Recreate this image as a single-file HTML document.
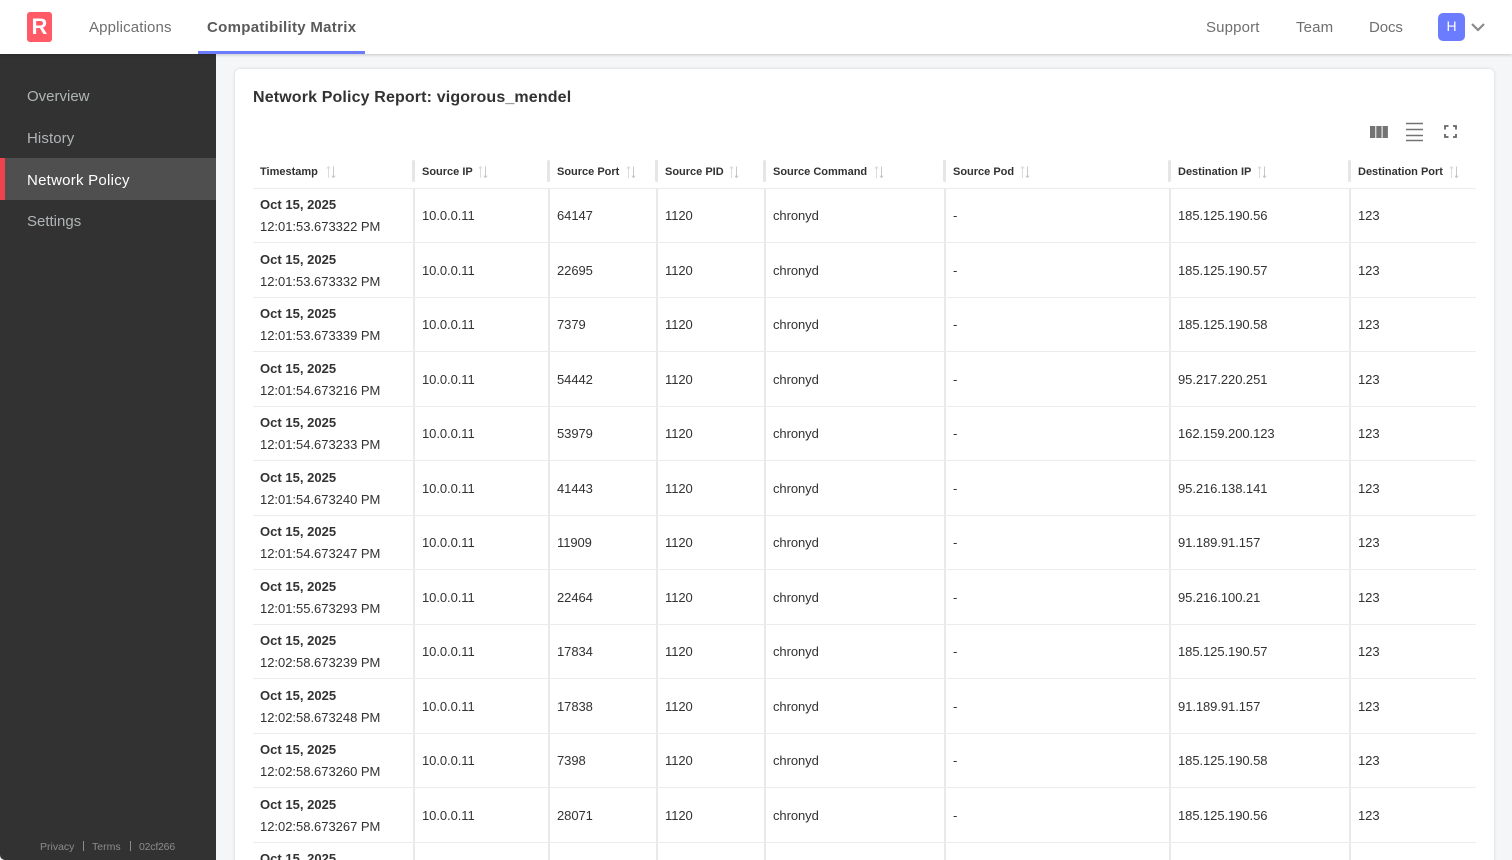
<!DOCTYPE html>
<html><head><meta charset="utf-8"><title>Network Policy Report</title>
<style>
*{box-sizing:border-box}
html,body{margin:0;padding:0;width:1512px;height:860px;overflow:hidden;background:#f5f6f8;font-family:"Liberation Sans",sans-serif}
#wrap{position:relative;left:0;top:0;width:1512px;height:860px;overflow:hidden}
div,span{position:absolute;white-space:nowrap}
#top{left:0;top:0;width:1512px;height:54px;background:#fff;box-shadow:0 1px 3px rgba(0,0,0,.2);z-index:3}
.n{top:18px;line-height:20px;font-size:15px;color:#6f6f6f;letter-spacing:.15px}
#side{left:0;top:54px;width:216px;height:806px;background:#323232;border-bottom-left-radius:5px}
.s{left:27px;line-height:20px;font-size:15px;color:#b0b5b5;letter-spacing:0}
.f{top:840px;line-height:14px;font-size:10.500px;color:#8c8c8c;letter-spacing:0}
#card{left:235px;top:69px;width:1259px;height:820px;background:#fff;border-radius:5px;box-shadow:0 0 3px rgba(0,0,0,.14)}
#title{left:253px;top:88px;line-height:20px;font-size:16px;font-weight:bold;color:#323232;letter-spacing:.14px}
.h{top:165px;line-height:14px;font-size:11px;font-weight:bold;color:#323232;letter-spacing:0}
.gh{top:160px;width:3px;height:22px;background:#e6e6e6;border-radius:2px}
.v{top:188px;width:2px;height:672px;background:#e9e9e9}
.l{left:253px;width:1223px;height:1px;background:#ececec}
.r{left:0;width:1512px;height:54px;font-size:13px;color:#323232;letter-spacing:-.07px}
.r span{line-height:16px;top:21px}
.r .d{left:260px;top:10px;font-weight:bold;letter-spacing:.02px}
.r .t{left:260px;top:32px;letter-spacing:-.02px}
.a{left:422px}.b{left:557px}.c{left:665px}.e{left:773px}.g{left:953px}.i{left:1178px}.j{left:1358px}
svg{position:absolute;overflow:visible}
</style></head><body><div id="wrap">
<div id="side">
<div style="left:0;top:104px;width:216px;height:42px;background:#4f4f4f"></div>
<div style="left:0;top:104px;width:5px;height:42px;background:#f0414f"></div>
</div>
<div class="s" style="top:87px">Overview</div>
<div class="s" style="top:129px;letter-spacing:.1px">History</div>
<div class="s" style="top:171px;color:#fff;letter-spacing:.25px">Network Policy</div>
<div class="s" style="top:212px">Settings</div>
<div class="f" style="left:40px">Privacy</div><div style="left:83px;top:841px;width:1px;height:10px;background:#8c8c8c"></div>
<div class="f" style="left:92px">Terms</div><div style="left:130px;top:841px;width:1px;height:10px;background:#8c8c8c"></div>
<div class="f" style="left:139px;letter-spacing:-.2px">02cf266</div>

<div id="card"></div>
<div id="title">Network Policy Report: vigorous_mendel</div>
<svg style="left:1370px;top:126px" width="18" height="12"><path d="M0 0h5.300v12H0zM6.300 0h5.300v12H6.300zM12.600 0h5.300v12h-5.300z" fill="#737373"/></svg>
<svg style="left:1406px;top:122px" width="17" height="20"><path d="M0 1.500h17M0 7.500h17M0 13.500h17M0 18.500h17" stroke="#737373" stroke-width="1.600" fill="none"/></svg>
<svg style="left:1444px;top:125px" width="13" height="13"><path d="M1 4.500V1h3.500M9 1h3v3.500M12 9v3H9M4.500 12H1V9" stroke="#666" stroke-width="1.800" fill="none"/></svg>

<div class="h" style="left:260px">Timestamp</div>
<div class="h" style="left:422px">Source IP</div>
<div class="h" style="left:557px">Source Port</div>
<div class="h" style="left:665px">Source PID</div>
<div class="h" style="left:773px">Source Command</div>
<div class="h" style="left:953px">Source Pod</div>
<div class="h" style="left:1178px">Destination IP</div>
<div class="h" style="left:1358px">Destination Port</div>
<svg style="left:326px;top:166px" width="10" height="13"><path d="M2.500 12V.7M.8 2.500 2.500 .7 4.200 2.500" stroke="#dcdcdc" stroke-width="1" fill="none"/><path d="M7.500 .5V11.500M5.800 9.700 7.500 11.500 9.200 9.700" stroke="#c8c8c8" stroke-width="1" fill="none"/></svg>
<svg style="left:478px;top:166px" width="10" height="13"><path d="M2.500 12V.7M.8 2.500 2.500 .7 4.200 2.500" stroke="#dcdcdc" stroke-width="1" fill="none"/><path d="M7.500 .5V11.500M5.800 9.700 7.500 11.500 9.200 9.700" stroke="#c8c8c8" stroke-width="1" fill="none"/></svg>
<svg style="left:626px;top:166px" width="10" height="13"><path d="M2.500 12V.7M.8 2.500 2.500 .7 4.200 2.500" stroke="#dcdcdc" stroke-width="1" fill="none"/><path d="M7.500 .5V11.500M5.800 9.700 7.500 11.500 9.200 9.700" stroke="#c8c8c8" stroke-width="1" fill="none"/></svg>
<svg style="left:729px;top:166px" width="10" height="13"><path d="M2.500 12V.7M.8 2.500 2.500 .7 4.200 2.500" stroke="#dcdcdc" stroke-width="1" fill="none"/><path d="M7.500 .5V11.500M5.800 9.700 7.500 11.500 9.200 9.700" stroke="#c8c8c8" stroke-width="1" fill="none"/></svg>
<svg style="left:874px;top:166px" width="10" height="13"><path d="M2.500 12V.7M.8 2.500 2.500 .7 4.200 2.500" stroke="#dcdcdc" stroke-width="1" fill="none"/><path d="M7.500 .5V11.500M5.800 9.700 7.500 11.500 9.200 9.700" stroke="#c8c8c8" stroke-width="1" fill="none"/></svg>
<svg style="left:1020px;top:166px" width="10" height="13"><path d="M2.500 12V.7M.8 2.500 2.500 .7 4.200 2.500" stroke="#dcdcdc" stroke-width="1" fill="none"/><path d="M7.500 .5V11.500M5.800 9.700 7.500 11.500 9.200 9.700" stroke="#c8c8c8" stroke-width="1" fill="none"/></svg>
<svg style="left:1257px;top:166px" width="10" height="13"><path d="M2.500 12V.7M.8 2.500 2.500 .7 4.200 2.500" stroke="#dcdcdc" stroke-width="1" fill="none"/><path d="M7.500 .5V11.500M5.800 9.700 7.500 11.500 9.200 9.700" stroke="#c8c8c8" stroke-width="1" fill="none"/></svg>
<svg style="left:1449px;top:166px" width="10" height="13"><path d="M2.500 12V.7M.8 2.500 2.500 .7 4.200 2.500" stroke="#dcdcdc" stroke-width="1" fill="none"/><path d="M7.500 .5V11.500M5.800 9.700 7.500 11.500 9.200 9.700" stroke="#c8c8c8" stroke-width="1" fill="none"/></svg>

<div class="gh" style="left:412px"></div><div class="gh" style="left:547px"></div><div class="gh" style="left:655px"></div><div class="gh" style="left:763px"></div><div class="gh" style="left:943px"></div><div class="gh" style="left:1168px"></div><div class="gh" style="left:1348px"></div>
<div class="v" style="left:413px"></div><div class="v" style="left:548px"></div><div class="v" style="left:656px"></div><div class="v" style="left:764px"></div><div class="v" style="left:944px"></div><div class="v" style="left:1169px"></div><div class="v" style="left:1349px"></div>

<div class="l" style="top:188px"></div><div class="l" style="top:242px"></div><div class="l" style="top:297px"></div><div class="l" style="top:351px"></div><div class="l" style="top:406px"></div><div class="l" style="top:460px"></div><div class="l" style="top:515px"></div><div class="l" style="top:569px"></div><div class="l" style="top:624px"></div><div class="l" style="top:678px"></div><div class="l" style="top:733px"></div><div class="l" style="top:787px"></div><div class="l" style="top:842px"></div>

<div class="r" style="top:187px"><span class="d">Oct 15, 2025</span><span class="t">12:01:53.673322 PM</span><span class="a">10.0.0.11</span><span class="b">64147</span><span class="c">1120</span><span class="e">chronyd</span><span class="g">-</span><span class="i">185.125.190.56</span><span class="j">123</span></div>
<div class="r" style="top:242px"><span class="d">Oct 15, 2025</span><span class="t">12:01:53.673332 PM</span><span class="a">10.0.0.11</span><span class="b">22695</span><span class="c">1120</span><span class="e">chronyd</span><span class="g">-</span><span class="i">185.125.190.57</span><span class="j">123</span></div>
<div class="r" style="top:296px"><span class="d">Oct 15, 2025</span><span class="t">12:01:53.673339 PM</span><span class="a">10.0.0.11</span><span class="b">7379</span><span class="c">1120</span><span class="e">chronyd</span><span class="g">-</span><span class="i">185.125.190.58</span><span class="j">123</span></div>
<div class="r" style="top:351px"><span class="d">Oct 15, 2025</span><span class="t">12:01:54.673216 PM</span><span class="a">10.0.0.11</span><span class="b">54442</span><span class="c">1120</span><span class="e">chronyd</span><span class="g">-</span><span class="i">95.217.220.251</span><span class="j">123</span></div>
<div class="r" style="top:405px"><span class="d">Oct 15, 2025</span><span class="t">12:01:54.673233 PM</span><span class="a">10.0.0.11</span><span class="b">53979</span><span class="c">1120</span><span class="e">chronyd</span><span class="g">-</span><span class="i">162.159.200.123</span><span class="j">123</span></div>
<div class="r" style="top:460px"><span class="d">Oct 15, 2025</span><span class="t">12:01:54.673240 PM</span><span class="a">10.0.0.11</span><span class="b">41443</span><span class="c">1120</span><span class="e">chronyd</span><span class="g">-</span><span class="i">95.216.138.141</span><span class="j">123</span></div>
<div class="r" style="top:514px"><span class="d">Oct 15, 2025</span><span class="t">12:01:54.673247 PM</span><span class="a">10.0.0.11</span><span class="b">11909</span><span class="c">1120</span><span class="e">chronyd</span><span class="g">-</span><span class="i">91.189.91.157</span><span class="j">123</span></div>
<div class="r" style="top:569px"><span class="d">Oct 15, 2025</span><span class="t">12:01:55.673293 PM</span><span class="a">10.0.0.11</span><span class="b">22464</span><span class="c">1120</span><span class="e">chronyd</span><span class="g">-</span><span class="i">95.216.100.21</span><span class="j">123</span></div>
<div class="r" style="top:623px"><span class="d">Oct 15, 2025</span><span class="t">12:02:58.673239 PM</span><span class="a">10.0.0.11</span><span class="b">17834</span><span class="c">1120</span><span class="e">chronyd</span><span class="g">-</span><span class="i">185.125.190.57</span><span class="j">123</span></div>
<div class="r" style="top:678px"><span class="d">Oct 15, 2025</span><span class="t">12:02:58.673248 PM</span><span class="a">10.0.0.11</span><span class="b">17838</span><span class="c">1120</span><span class="e">chronyd</span><span class="g">-</span><span class="i">91.189.91.157</span><span class="j">123</span></div>
<div class="r" style="top:732px"><span class="d">Oct 15, 2025</span><span class="t">12:02:58.673260 PM</span><span class="a">10.0.0.11</span><span class="b">7398</span><span class="c">1120</span><span class="e">chronyd</span><span class="g">-</span><span class="i">185.125.190.58</span><span class="j">123</span></div>
<div class="r" style="top:787px"><span class="d">Oct 15, 2025</span><span class="t">12:02:58.673267 PM</span><span class="a">10.0.0.11</span><span class="b">28071</span><span class="c">1120</span><span class="e">chronyd</span><span class="g">-</span><span class="i">185.125.190.56</span><span class="j">123</span></div>
<div class="r" style="top:841px"><span class="d">Oct 15, 2025</span></div>

<div id="top">
<div style="left:27px;top:12px;width:25px;height:30px;background:#ff5a66;border-radius:3px"></div>
<div style="left:27px;top:12px;width:25px;height:30px;line-height:30px;text-align:center;font-size:22px;font-weight:bold;color:#fff">R</div>
<div class="n" style="left:89px">Applications</div>
<div class="n" style="left:207px;font-weight:bold;letter-spacing:.3px;color:#5a5a5a">Compatibility Matrix</div>
<div style="left:198px;top:51px;width:167px;height:3px;background:#6c7cff"></div>
<div class="n" style="left:1206px">Support</div>
<div class="n" style="left:1296px">Team</div>
<div class="n" style="left:1369px;letter-spacing:-.1px">Docs</div>
<div style="left:1438px;top:13px;width:27px;height:28px;line-height:27px;text-align:center;background:#6c7cff;border-radius:5px;color:#fff;font-size:14px">H</div>
<svg style="left:1471px;top:23px" width="14" height="9"><path d="M1 1 7 7 13 1" stroke="#8a8a8a" stroke-width="2.200" fill="none"/></svg>
</div>
</div></body></html>
